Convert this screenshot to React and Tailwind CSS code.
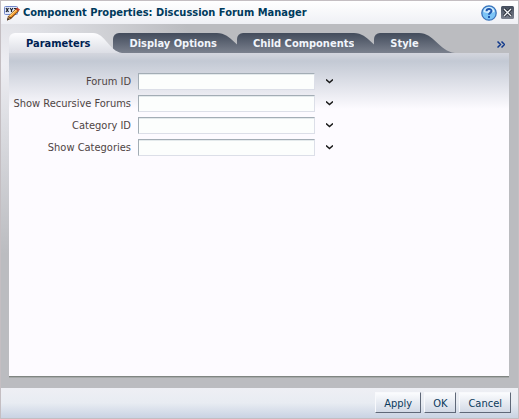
import clsx from 'clsx';

const tabs = ['Parameters', 'Display Options', 'Child Components', 'Style'];
const fields = ['Forum ID', 'Show Recursive Forums', 'Category ID', 'Show Categories'];

function PropertiesIcon() {
  return (
    <svg className="w-4 h-4 shrink-0" viewBox="0 0 16 16" aria-hidden="true">
      <rect x="0.5" y="1.5" width="13" height="8" rx="1" fill="#e3e9fc" stroke="#7288cc" />
      <path d="M2 3l2.500 4M4.500 3L2 7M6 3l1.500 2L9 3M7.500 5v2M10 3.500h2.500L10 7" stroke="#1c2430" strokeWidth="1.200" fill="none" />
      <path d="M3 15.500l1-4L12 3.500l3 2.500-8 8z" fill="#6b3a10" />
      <path d="M5 11l7-6.500 2 1.500-7 6.500z" fill="#f5972c" />
      <path d="M5 11l7-6.500.7.5-7 6.700z" fill="#ffdf8a" />
      <path d="M12 4l1-1.500 3 2-1.500 1.800z" fill="#c9402f" />
      <path d="M3 15.500l1-4 2.500 2.300z" fill="#b98a5a" />
      <path d="M3 15.500l.8-2.500 1.500 1.300z" fill="#222" />
    </svg>
  );
}

function Tab({ label, active }) {
  return (
    <button
      type="button"
      role="tab"
      aria-selected={active}
      className={clsx('relative flex h-5 -mr-4 shrink-0 font-bold', active ? 'z-10 text-[#001f52]' : 'text-[#f1f5fb]')}
    >
      <span
        className={clsx(
          'flex h-5 items-center rounded-tl-md bg-linear-to-b pt-[2px] whitespace-nowrap',
          active ? 'from-[#fdfdff] to-[#dcdee5] pr-[3px] pl-[17px]' : 'from-[#434c5c] to-[#7b818e] pl-4'
        )}
      >
        {label}
      </span>
      <svg className="w-9 h-5 shrink-0" viewBox="0 0 36 20" preserveAspectRatio="none" aria-hidden="true">
        <defs>
          <linearGradient id={active ? 'slope-active' : 'slope'} x1="0" y1="0" x2="0" y2="1">
            <stop offset="0" stopColor={active ? '#fdfdff' : '#434c5c'} />
            <stop offset="1" stopColor={active ? '#dcdee5' : '#7b818e'} />
          </linearGradient>
        </defs>
        <path d={active ? 'M0 0C12 0 16 18 29 20H0z' : 'M0 0C15 0 20 18 36 20H0z'} fill={active ? 'url(#slope-active)' : 'url(#slope)'} />
      </svg>
    </button>
  );
}

function FieldRow({ label }) {
  const id = label.toLowerCase().replaceAll(' ', '-');
  return (
    <div className="flex h-[22px] items-center">
      <label htmlFor={id} className="w-[122px] shrink-0 pt-px text-right whitespace-nowrap text-[#4f4444]">
        {label}
      </label>
      <input
        id={id}
        type="text"
        className="ml-[7px] h-[17px] w-[177px] border border-t-[#a3adb5] border-l-[#a3adb5] border-r-[#dcdfe8] border-b-[#dcdfe8] bg-[#fcfefd] px-1 shadow-[inset_0_1px_0_#e4eaec] outline-none"
      />
      <button type="button" aria-label={`${label} options`} className="ml-2 flex h-3 w-3 items-center justify-center">
        <svg className="h-[5px] w-[7px]" viewBox="0 0 7 5" aria-hidden="true">
          <path d="M0 0.500l3.500 3L7 0.500" fill="none" stroke="#1b1b1b" strokeWidth="1.500" />
        </svg>
      </button>
    </div>
  );
}

function DialogButton({ children }) {
  return (
    <button
      type="button"
      className="h-[21px] border border-t-[#f8f9fc] border-l-[#f8f9fc] border-r-[#5f6878] border-b-[#5f6878] bg-linear-to-b from-[#fbfcfe] to-[#d3dae6] px-2 pt-[2px] text-[#0b3a5c]"
    >
      {children}
    </button>
  );
}

export default function App() {
  return (
    <div className="flex min-h-screen flex-col border border-[#c4bec2] bg-[#bbbcc0] text-[11px] leading-4 font-['DejaVu_Sans_Condensed','DejaVu_Sans',sans-serif]">
      <header className="flex h-[23px] items-center bg-linear-to-b from-white to-[#eff0f5] pr-1 pl-[3px]">
        <PropertiesIcon />
        <h1 className="ml-[3px] grow pt-px font-bold whitespace-nowrap text-[#003a5c]">
          Component Properties: Discussion Forum Manager
        </h1>
        <button type="button" aria-label="Help" className="h-4 w-4">
          <svg viewBox="0 0 16 16" aria-hidden="true">
            <circle cx="8" cy="8" r="7.200" fill="#7cc4f6" stroke="#3b74bb" strokeWidth="1.300" />
            <path d="M2.500 7a5.500 5 0 0 1 11 0Q8 9 2.500 7z" fill="#d8f0ff" />
            <path d="M5.500 6.200C5.500 3.300 10.500 3.300 10.500 6C10.500 7.600 8 7.600 8 9.700" fill="none" stroke="#1f56ad" strokeWidth="2" />
            <rect x="7" y="11" width="2" height="2" fill="#1f56ad" />
          </svg>
        </button>
        <button type="button" aria-label="Close" className="mb-px ml-1 h-[13px] w-[13px]">
          <svg viewBox="0 0 13 13" aria-hidden="true">
            <defs>
              <linearGradient id="close-fill" x1="0" y1="0" x2="0" y2="1">
                <stop offset="0" stopColor="#434c5c" />
                <stop offset="1" stopColor="#7b818e" />
              </linearGradient>
            </defs>
            <rect width="13" height="13" rx="1.500" fill="url(#close-fill)" />
            <path d="M3 3l7 7M10 3l-7 7" stroke="#1d222b" strokeWidth="3" />
            <path d="M3 3l7 7M10 3l-7 7" stroke="#f4f6fa" strokeWidth="1.300" />
          </svg>
        </button>
      </header>

      <main className="flex grow flex-col bg-[radial-gradient(circle_at_0_40px,#eeeef3_0,#dcdde2_60px,#bbbcc0_190px)] px-2 pt-[9px] pb-[11px]">
        <div role="tablist" className="flex">
          {tabs.map((tab, i) => (
            <Tab key={tab} label={tab} active={i === 0} />
          ))}
          <button type="button" aria-label="More tabs" className="mr-[5px] ml-auto flex items-center pt-[2px]">
            <svg className="h-[7px] w-2" viewBox="0 0 8 7" aria-hidden="true">
              <path d="M0.500 0.500l3 3-3 3M4.500 0.500l3 3-3 3" fill="none" stroke="#123a8c" strokeWidth="1.500" />
            </svg>
          </button>
        </div>
        <section className="mr-[1px] grow border-b border-[#808582] bg-[#fdfbff] bg-linear-to-b from-[#d4d6de] via-[#c3c9d4] via-[8px] to-[#fdfbff] to-[56px] pt-[17px] shadow-[0_1px_0_#a5a8a8]">
          {fields.map((field) => (
            <FieldRow key={field} label={field} />
          ))}
        </section>
      </main>

      <footer className="flex h-[30px] items-start justify-end gap-[3px] bg-linear-to-b from-[#eeeff4] via-[#e8ecf2] to-[#c9d3e3] pt-1 pr-[7px]">
        <DialogButton>Apply</DialogButton>
        <DialogButton>OK</DialogButton>
        <DialogButton>Cancel</DialogButton>
      </footer>
    </div>
  );
}
